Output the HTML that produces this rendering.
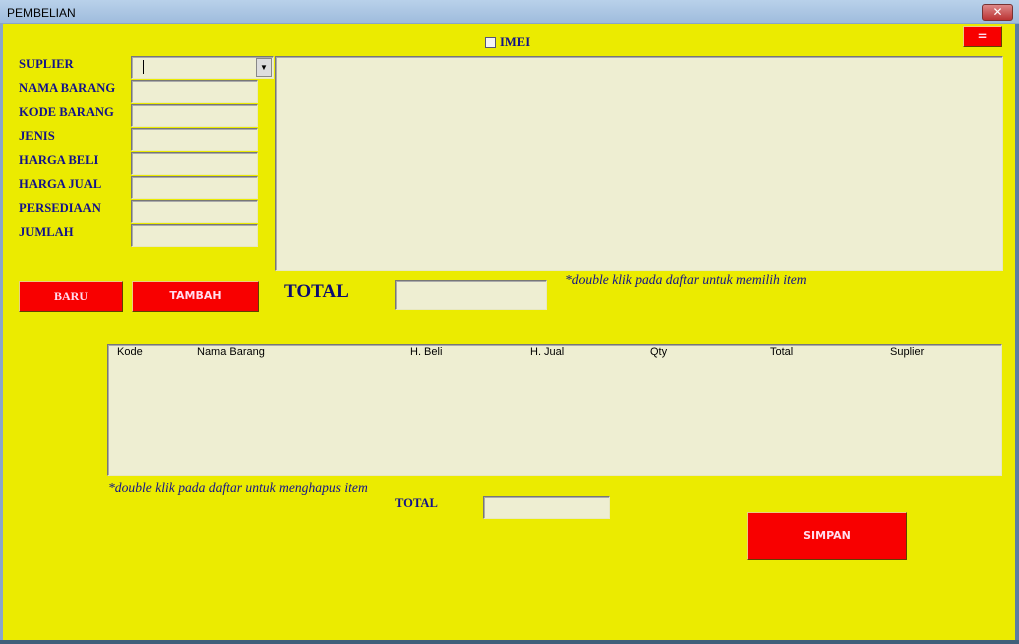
<!DOCTYPE html><html><head><style>
body{margin:0;width:1019px;height:644px;overflow:hidden;background:#ebeb00;position:relative;font-family:"Liberation Serif",serif}
div{position:absolute;box-sizing:border-box}
.t{height:24px;left:0;top:0;width:1019px;background:linear-gradient(#b9d1ea,#9fbcdd);font:12px "Liberation Sans",sans-serif;color:#000;padding:6px 0 0 7px;border-bottom:1px solid #8aa6c8}
.lb{left:19px;font-weight:bold;font-size:12.6px;color:#12128a}
.in{background:#eeeed2;border:1px solid;border-color:#777 #e8e8c0 #e8e8c0 #777;box-shadow:inset 1px 1px 0 #aaa}
.bt{background:#f80000;border:1px solid;border-color:#e8d080 #604000 #604000 #e8d080;color:#fde;font:bold 11px "DejaVu Sans",sans-serif;text-align:center}
.h{top:346px;font:11px "Liberation Sans",sans-serif;color:#000}
.it{font-style:italic;font-size:13.6px;color:#12128a}
</style></head><body>
<div class="t">PEMBELIAN</div>
<div style="left:982px;top:4px;width:31px;height:17px;background:linear-gradient(#d88,#b33);border:1px solid #733;border-radius:3px;color:#fff;font:bold 12px 'DejaVu Sans';text-align:center;line-height:15px">✕</div>
<div style="left:0;top:24px;width:3px;height:620px;background:#8aa6c8"></div>
<div style="left:1015px;top:24px;width:4px;height:620px;background:#5a7ea0"></div>
<div style="left:0;top:640px;width:1019px;height:4px;background:#40607a"></div>
<div class="bt" style="left:963px;top:26px;width:39px;height:21px;font-size:12px;line-height:18px">=</div>
<div style="left:485px;top:37px;width:11px;height:11px;background:#f4f4f4;border:1px solid #557"></div>
<div class="lb" style="left:500px;top:35px">IMEI</div>
<div class="lb" style="top:57px">SUPLIER</div>
<div class="lb" style="top:81px">NAMA BARANG</div>
<div class="lb" style="top:105px">KODE BARANG</div>
<div class="lb" style="top:129px">JENIS</div>
<div class="lb" style="top:153px">HARGA BELI</div>
<div class="lb" style="top:177px">HARGA JUAL</div>
<div class="lb" style="top:201px">PERSEDIAAN</div>
<div class="lb" style="top:225px">JUMLAH</div>
<div class="in" style="left:131px;top:56px;width:143px;height:23px"></div>
<div style="left:143px;top:60px;width:1px;height:14px;background:#000"></div>
<div style="left:256px;top:58px;width:16px;height:19px;background:#ddd;border:1px solid #888;font-size:8px;text-align:center;line-height:17px">▼</div>
<div class="in" style="left:131px;top:80px;width:127px;height:23px"></div>
<div class="in" style="left:131px;top:104px;width:127px;height:23px"></div>
<div class="in" style="left:131px;top:128px;width:127px;height:23px"></div>
<div class="in" style="left:131px;top:152px;width:127px;height:23px"></div>
<div class="in" style="left:131px;top:176px;width:127px;height:23px"></div>
<div class="in" style="left:131px;top:200px;width:127px;height:23px"></div>
<div class="in" style="left:131px;top:224px;width:127px;height:23px"></div>
<div class="in" style="left:275px;top:56px;width:728px;height:215px"></div>
<div class="bt" style="left:19px;top:281px;width:104px;height:31px;font:bold 12px 'Liberation Serif',serif;line-height:28px">BARU</div>
<div class="bt" style="left:132px;top:281px;width:127px;height:31px;line-height:28px">TAMBAH</div>
<div class="lb" style="left:284px;top:281px;font-size:19px;color:#0c0c70">TOTAL</div>
<div class="in" style="left:395px;top:280px;width:152px;height:30px"></div>
<div class="it" style="left:565px;top:272px">*double klik pada daftar untuk memilih item</div>
<div class="in" style="left:107px;top:344px;width:895px;height:132px"></div>
<div class="h" style="left:117px">Kode</div>
<div class="h" style="left:197px">Nama Barang</div>
<div class="h" style="left:410px">H. Beli</div>
<div class="h" style="left:530px">H. Jual</div>
<div class="h" style="left:650px">Qty</div>
<div class="h" style="left:770px">Total</div>
<div class="h" style="left:890px">Suplier</div>
<div class="it" style="left:108px;top:480px">*double klik pada daftar untuk menghapus item</div>
<div class="lb" style="left:395px;top:496px">TOTAL</div>
<div class="in" style="left:483px;top:496px;width:127px;height:23px"></div>
<div class="bt" style="left:747px;top:512px;width:160px;height:48px;line-height:45px">SIMPAN</div>
</body></html>
